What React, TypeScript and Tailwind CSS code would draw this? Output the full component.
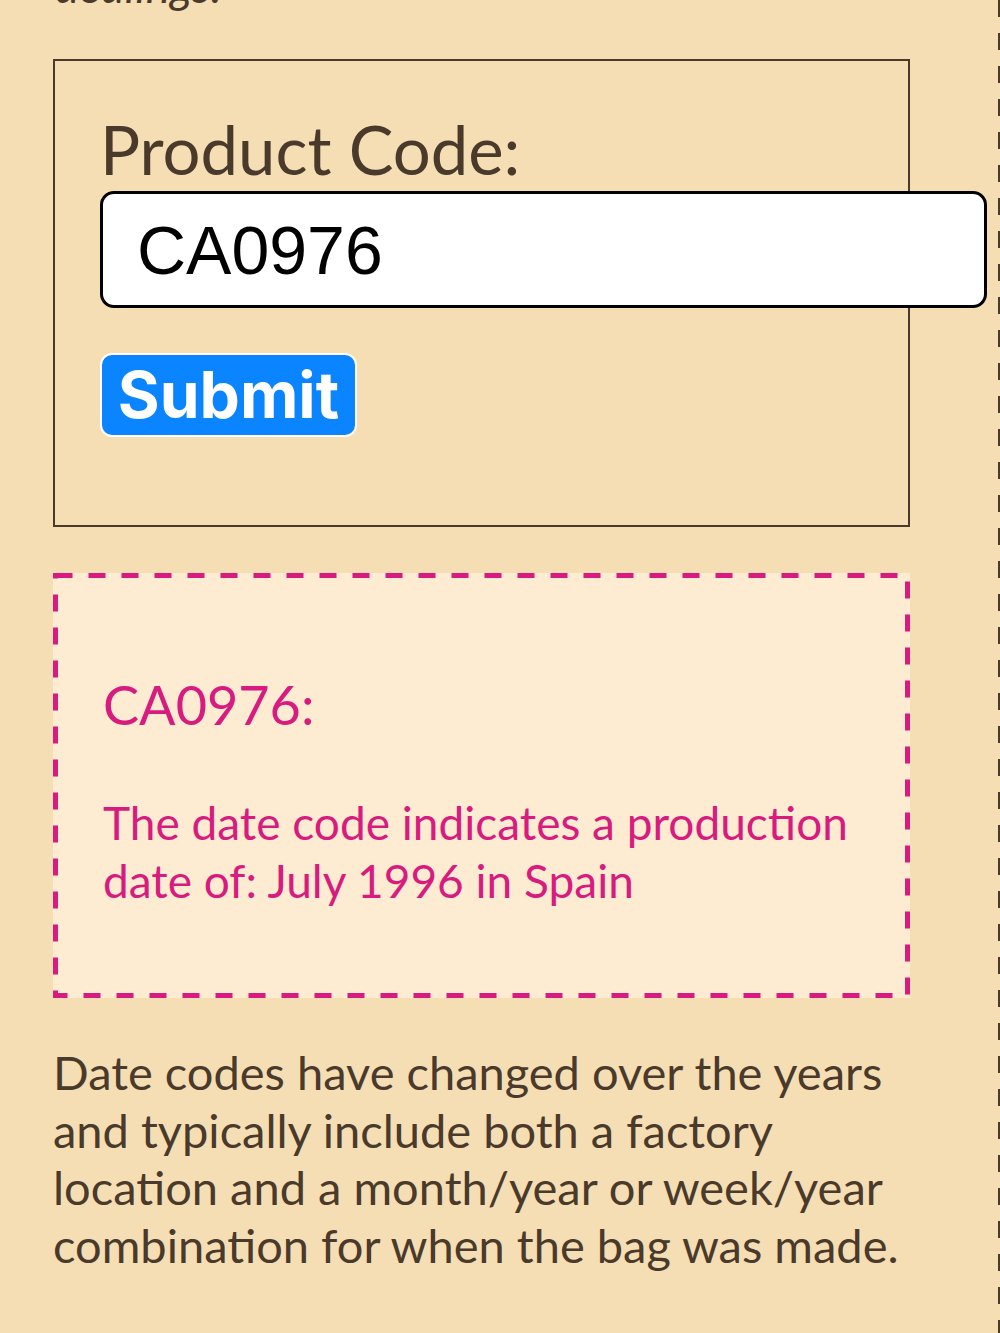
import React from "react";

const body = "font-['Lato','Noto_Sans',sans-serif]";

export default function App() {
  return (
    <div className="flex min-h-[1333px] w-[1000px] overflow-hidden bg-[#f5deb3] text-[#4a3a2c]">
      <div className="flex-1">
        <div className="w-[857px] ml-[53px]">
          {/* tail of the previous paragraph */}
          <p className={`${body} -mt-[40px] h-[52px] pl-[2px] text-[46px] italic leading-[52px]`}>
            dealings.
          </p>

          <form
            className="mt-[47px] h-[468px] border-2 border-[#4a3a2c] pl-[45px] pt-[48px]"
            onSubmit={(e) => e.preventDefault()}
          >
            <label className={`${body} block text-[67px] leading-[80px]`} htmlFor="code">
              Product Code:
            </label>
            <input
              id="code"
              defaultValue="CA0976"
              className="mt-[2px] block h-[117px] w-[887px] rounded-[14px] border-[3px] border-black bg-white pl-[34px] font-['Liberation_Sans',Arial,sans-serif] text-[68px] text-black outline-none"
            />
            <button
              type="submit"
              className="mt-[45px] block h-[84px] w-[257px] rounded-[12px] border-2 border-white bg-[#0a84ff] font-['Inter','Liberation_Sans',sans-serif] text-[64px] font-bold leading-none text-white"
            >
              Submit
            </button>
          </form>

          <div className="relative mt-[46px] h-[425px] bg-[#fdebd2] pl-[50px] pt-[100px] text-[#d81b7f]">
            <svg className="pointer-events-none absolute inset-0" width="857" height="425">
              <rect
                x="2.5"
                y="2.5"
                width="852"
                height="420"
                fill="none"
                stroke="#d81b7f"
                strokeWidth="5"
                strokeDasharray="17 16"
              />
            </svg>
            <h2 className={`${body} text-[54px] leading-[64px]`}>CA0976:</h2>
            <p className={`${body} mt-[57px] text-[46px] leading-[58px]`}>
              The date code indicates a production
              <br />
              date of: July 1996 in Spain
            </p>
          </div>

          <p className={`${body} mt-[46px] text-[47px] leading-[57.5px]`}>
            Date codes have changed over the years
            <br />
            and typically include both a factory
            <br />
            location and a month/year or week/year
            <br />
            combination for when the bag was made.
          </p>
        </div>
      </div>
      <div className="w-[2px] shrink-0 bg-[repeating-linear-gradient(to_bottom,#4a3a2c_0px,#4a3a2c_17px,transparent_17px,transparent_33px)]" />
    </div>
  );
}
